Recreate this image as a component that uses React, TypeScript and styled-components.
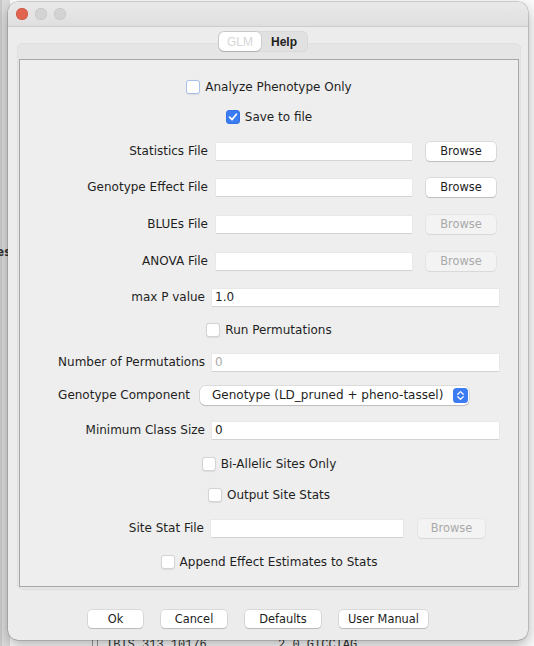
import React from 'react';
import styled, { createGlobalStyle } from 'styled-components';

const GlobalStyle = createGlobalStyle`
  html, body {
    margin: 0;
    padding: 0;
  }
  body {
    width: 534px;
    height: 646px;
    overflow: hidden;
    background: #ffffff;
    font-family: "DejaVu Sans", "Liberation Sans", sans-serif;
  }
`;

const Desktop = styled.div`
  position: relative;
  width: 534px;
  height: 646px;
  overflow: hidden;
  background: #fbfbfb;
`;

/* the app window that sits behind the dialog */
const BackStrip = styled.div`
  position: absolute;
  left: 0;
  top: 0;
  bottom: 0;
  width: 10px;
  background: linear-gradient(to right, #c9c9c9 0, #c9c9c9 2px, #dcdcdc 2px, #dcdcdc 10px);
`;

const BackLabel = styled.span`
  position: absolute;
  left: -4px;
  top: 245px;
  font-size: 12px;
  font-weight: bold;
  color: #333;
`;

const BackRow = styled.div`
  position: absolute;
  left: 92px;
  top: 638px;
  display: flex;
  align-items: flex-start;
  gap: 8px;
  font-family: "Liberation Mono", monospace;
  font-size: 12px;
  color: #333;
`;

const BackGrip = styled.span`
  width: 4px;
  height: 10px;
  border-left: 1px solid #999;
  border-right: 1px solid #999;
`;

const BackCell = styled.span<{ $w?: number }>`
  width: ${({ $w }) => ($w ? `${$w}px` : 'auto')};
  white-space: pre;
`;

const Window = styled.div`
  position: relative;
  z-index: 1;
  margin: 2px 0 0 8px;
  width: 520px;
  height: 638px;
  box-sizing: border-box;
  border-radius: 10px;
  background: #ececec;
  box-shadow: 0 0 0 0.5px rgba(0, 0, 0, 0.28), 0 5px 14px rgba(0, 0, 0, 0.3);
  display: flex;
  flex-direction: column;
  overflow: hidden;
`;

const TitleBar = styled.div`
  height: 25px;
  flex: 0 0 25px;
  display: flex;
  align-items: center;
  gap: 7px;
  padding-left: 8px;
  background: linear-gradient(#e9e9e9, #dfdfdf);
  border-bottom: 1px solid #cdcdcd;
  box-sizing: border-box;
`;

const Light = styled.span<{ $color: string; $edge: string }>`
  width: 12px;
  height: 12px;
  border-radius: 50%;
  background: ${({ $color }) => $color};
  box-shadow: inset 0 0 0 0.5px ${({ $edge }) => $edge};
`;

const TabArea = styled.div`
  padding: 4px 7px 0 9px;
`;

const TabStrip = styled.div`
  position: relative;
  z-index: 1;
  display: flex;
  justify-content: center;
  margin-bottom: -9px;
  padding-right: 12px;
`;

const Segment = styled.div`
  display: flex;
  height: 21px;
  padding: 1px;
  box-sizing: border-box;
  border-radius: 6px;
  background: #e1e1e1;
  box-shadow: inset 0 0 0 0.5px #d2d2d2;
`;

const SegmentTab = styled.div<{ $active?: boolean }>`
  display: flex;
  align-items: center;
  justify-content: center;
  width: ${({ $active }) => ($active ? 42 : 46)}px;
  border-radius: 5px;
  font-family: "Liberation Sans", sans-serif;
  font-size: 12px;
  font-weight: ${({ $active }) => ($active ? 'normal' : 'bold')};
  color: ${({ $active }) => ($active ? '#d6d6d6' : '#222')};
  background: ${({ $active }) => ($active ? '#ffffff' : 'transparent')};
  box-shadow: ${({ $active }) => ($active ? '0 0 0 0.5px rgba(0,0,0,0.15), 0 1px 1px rgba(0,0,0,0.12)' : 'none')};
`;

const Panel = styled.div`
  height: 547px;
  box-sizing: border-box;
  padding: 16px 2px 3px 2px;
  border-radius: 6px;
  background: #e5e5e5;
  box-shadow: inset 0 0 0 0.5px #dadada;
`;

const Form = styled.div`
  height: 100%;
  box-sizing: border-box;
  border: 1px solid #a7a7a7;
  background: #eeeeee;
  padding-top: 16px;
  display: flex;
  flex-direction: column;
`;

const CheckRow = styled.label<{ $mt?: number }>`
  display: flex;
  justify-content: center;
  align-items: center;
  gap: 5px;
  height: 22px;
  margin-top: ${({ $mt }) => $mt ?? 0}px;
  font-size: 12px;
  color: #1f1f1f;
`;

const Box = styled.span<{ $checked?: boolean; $focus?: boolean }>`
  display: flex;
  align-items: center;
  justify-content: center;
  width: 14px;
  height: 14px;
  box-sizing: border-box;
  border-radius: 3px;
  background: ${({ $checked }) => ($checked ? '#3a7cf3' : '#ffffff')};
  border: 1px solid
    ${({ $checked, $focus }) => ($checked ? '#3272e6' : $focus ? '#a9c0ee' : '#d4d4d4')};
  box-shadow: ${({ $checked }) => ($checked ? 'none' : '0 0.5px 1px rgba(0,0,0,0.08)')};
`;

const FormRow = styled.div<{ $mt?: number }>`
  display: flex;
  align-items: center;
  height: 22px;
  margin-top: ${({ $mt }) => $mt ?? 0}px;
`;

const Label = styled.span<{ $w: number; $gap: number }>`
  flex: 0 0 ${({ $w }) => $w}px;
  box-sizing: border-box;
  padding-right: ${({ $gap }) => $gap}px;
  text-align: right;
  white-space: nowrap;
  font-size: 12px;
  color: #1f1f1f;
`;

const TextField = styled.input<{ $w: number }>`
  width: ${({ $w }) => $w}px;
  height: 17px;
  box-sizing: border-box;
  margin: 0;
  padding: 0 3px;
  border: none;
  outline: none;
  background: #ffffff;
  box-shadow: 0 1px 0 #d3d3d3, 0 0 0 0.5px #e2e2e2;
  font-family: "DejaVu Sans", sans-serif;
  font-size: 12px;
  color: #1f1f1f;

  &:disabled {
    color: #ababab;
  }
`;

const Button = styled.button<{ $w: number; $ml?: number }>`
  width: ${({ $w }) => $w}px;
  height: 19px;
  margin: 0 0 0 ${({ $ml }) => $ml ?? 0}px;
  padding: 0;
  border: none;
  border-radius: 4px;
  background: #ffffff;
  box-shadow: 0 0 0 0.5px rgba(0, 0, 0, 0.16), 0 1px 1px rgba(0, 0, 0, 0.14);
  font-family: "DejaVu Sans", sans-serif;
  font-size: 11.4px;
  color: #1d1d1d;

  &:disabled {
    background: #f3f3f3;
    color: #a9a9a9;
    box-shadow: 0 0 0 0.5px rgba(0, 0, 0, 0.07), 0 1px 1px rgba(0, 0, 0, 0.06);
  }
`;

const Select = styled.div`
  display: flex;
  align-items: center;
  width: 269px;
  height: 19px;
  box-sizing: border-box;
  padding: 0 1px 0 12px;
  border-radius: 5px;
  background: #ffffff;
  box-shadow: 0 0 0 0.5px rgba(0, 0, 0, 0.16), 0 1px 1px rgba(0, 0, 0, 0.14);
  font-size: 12px;
  color: #1f1f1f;

  svg {
    margin-left: auto;
  }
`;

const Footer = styled.div`
  display: flex;
  justify-content: center;
  gap: 18px;
  margin-top: 20px;
  padding-right: 20px;
`;

const FooterButton = styled(Button)`
  height: 18px;
  font-size: 11.4px;
`;

const Check: React.FC<{ checked?: boolean; focus?: boolean; label: string; mt: number }> = ({
  checked,
  focus,
  label,
  mt,
}) => (
  <CheckRow $mt={mt}>
    <Box $checked={checked} $focus={focus}>
      {checked && (
        <svg width="10" height="10" viewBox="0 0 10 10">
          <path d="M1.6 5.2 L4 7.6 L8.4 2.2" fill="none" stroke="#fff" strokeWidth="1.7" strokeLinecap="round" strokeLinejoin="round" />
        </svg>
      )}
    </Box>
    {label}
  </CheckRow>
);

const FileRow: React.FC<{ label: string; mt: number; enabled?: boolean }> = ({ label, mt, enabled }) => (
  <FormRow $mt={mt}>
    <Label $w={196} $gap={8}>{label}</Label>
    <TextField $w={196} readOnly />
    <Button $w={70} $ml={14} disabled={!enabled}>Browse</Button>
  </FormRow>
);

const NumberRow: React.FC<{ label: string; value: string; mt: number; disabled?: boolean }> = ({
  label,
  value,
  mt,
  disabled,
}) => (
  <FormRow $mt={mt}>
    <Label $w={192} $gap={7}>{label}</Label>
    <TextField $w={287} readOnly defaultValue={value} disabled={disabled} />
  </FormRow>
);

const Stepper = () => (
  <svg width="15" height="15" viewBox="0 0 15 15">
    <rect x="0" y="0" width="15" height="15" rx="3.5" fill="#3c7bf2" />
    <path d="M4.8 6.2 L7.5 3.6 L10.2 6.2" fill="none" stroke="#fff" strokeWidth="1.3" strokeLinecap="round" strokeLinejoin="round" />
    <path d="M4.8 8.8 L7.5 11.4 L10.2 8.8" fill="none" stroke="#fff" strokeWidth="1.3" strokeLinecap="round" strokeLinejoin="round" />
  </svg>
);

const App: React.FC = () => {
  return (
    <Desktop>
      <GlobalStyle />
      <BackStrip />
      <BackLabel>es</BackLabel>
      <BackRow>
        <BackGrip />
        <BackCell $w={164}>IBIS_313_10176</BackCell>
        <BackCell>2.0 GTCCTAG</BackCell>
      </BackRow>

      <Window>
        <TitleBar>
          <Light $color="#e0644f" $edge="#c9543f" />
          <Light $color="#d3d3d3" $edge="#c2c2c2" />
          <Light $color="#d3d3d3" $edge="#c2c2c2" />
        </TitleBar>

        <TabArea>
          <TabStrip>
            <Segment>
              <SegmentTab $active>GLM</SegmentTab>
              <SegmentTab>Help</SegmentTab>
            </Segment>
          </TabStrip>

          <Panel>
            <Form>
              <Check label="Analyze Phenotype Only" focus mt={0} />
              <Check label="Save to file" checked mt={8} />
              <FileRow label="Statistics File" mt={12} enabled />
              <FileRow label="Genotype Effect File" mt={14} enabled />
              <FileRow label="BLUEs File" mt={15} />
              <FileRow label="ANOVA File" mt={15} />
              <NumberRow label="max P value" value="1.0" mt={14} />
              <Check label="Run Permutations" mt={11} />
              <NumberRow label="Number of Permutations" value="0" mt={10} disabled />
              <FormRow $mt={11}>
                <Label $w={180} $gap={10}>Genotype Component</Label>
                <Select>
                  Genotype (LD_pruned + pheno-tassel)
                  <Stepper />
                </Select>
              </FormRow>
              <NumberRow label="Minimum Class Size" value="0" mt={13} />
              <Check label="Bi-Allelic Sites Only" mt={12} />
              <Check label="Output Site Stats" mt={9} />
              <FormRow $mt={11}>
                <Label $w={191} $gap={7}>Site Stat File</Label>
                <TextField $w={192} readOnly />
                <Button $w={67} $ml={15} disabled>Browse</Button>
              </FormRow>
              <Check label="Append Effect Estimates to Stats" mt={12} />
            </Form>
          </Panel>
        </TabArea>

        <Footer>
          <FooterButton $w={55}>Ok</FooterButton>
          <FooterButton $w={66}>Cancel</FooterButton>
          <FooterButton $w={76}>Defaults</FooterButton>
          <FooterButton $w={89}>User Manual</FooterButton>
        </Footer>
      </Window>
    </Desktop>
  );
};

export default App;
